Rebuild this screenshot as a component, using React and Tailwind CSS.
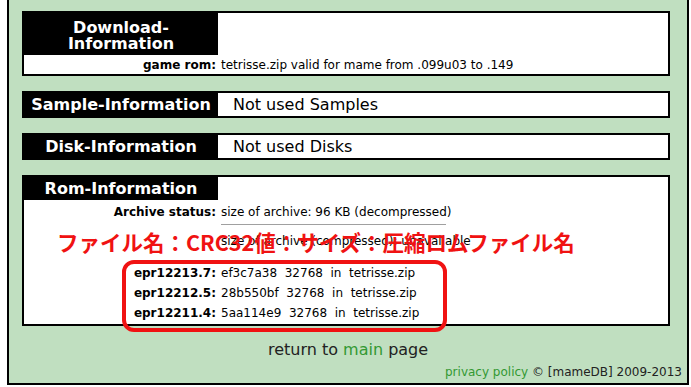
export default function App() {
  const label = "w-[192px] shrink-0 text-right font-bold";
  return (
    <div className="w-[691px] h-[387px] bg-white font-['DejaVu_Sans',sans-serif] text-black overflow-hidden">
      <div className="relative ml-[7px] w-[682px] h-[385px] bg-[#c0dfc0] border-2 border-t-0 border-black pt-[11px] flex flex-col">
        {/* Download */}
        <div className="ml-[13px] w-[648px] h-[65px] border-2 border-black bg-white flex flex-col">
          <div className="flex h-[42px]">
            <div className="w-[194px] bg-black text-white font-bold text-[16px] leading-[16px] flex flex-col items-center justify-center text-center pt-[3px]">
              <span>Download-</span>
              <span>Information</span>
            </div>
          </div>
          <div className="flex h-[19px] items-center text-[12px]">
            <div className={label}>game rom:</div>
            <div className="pl-[5px]">tetrisse.zip valid for mame from .099u03 to .149</div>
          </div>
        </div>

        {/* Sample */}
        <div className="ml-[13px] mt-[15px] w-[648px] h-[27px] border-2 border-black bg-white flex">
          <div className="w-[194px] bg-black text-white font-bold text-[16px] flex items-center justify-center">
            Sample-Information
          </div>
          <div className="pl-[15px] text-[16px] flex items-center">Not used Samples</div>
        </div>

        {/* Disk */}
        <div className="ml-[13px] mt-[15px] w-[648px] h-[27px] border-2 border-black bg-white flex">
          <div className="w-[194px] bg-black text-white font-bold text-[16px] flex items-center justify-center">
            Disk-Information
          </div>
          <div className="pl-[15px] text-[16px] flex items-center">Not used Disks</div>
        </div>

        {/* Rom */}
        <div className="ml-[13px] mt-[15px] w-[648px] h-[151px] border-2 border-black bg-white flex flex-col text-[12px]">
          <div className="flex h-[23px]">
            <div className="w-[194px] bg-black text-white font-bold text-[16px] flex items-center justify-center">
              Rom-Information
            </div>
          </div>
          <div className="flex h-[20px] mt-[2px] items-center">
            <div className={label}>Archive status:</div>
            <div className="pl-[5px]">size of archive: 96 KB (decompressed)</div>
          </div>
          <div className="flex mt-[2px]">
            <div className="w-[192px] shrink-0" />
            <div className="pl-[5px] flex-1">
              <div className="w-[225px] border-t border-[#a0a0a0]" />
            </div>
          </div>
          <div className="flex h-[20px] mt-[6px] items-center">
            <div className="w-[192px] shrink-0" />
            <div className="pl-[5px]">size of archive (compressed): unavailable</div>
          </div>
          <div className="flex flex-col mt-[12px]">
            {[
              ["epr12213.7:", "ef3c7a38\u00a0\u00a032768\u00a0\u00a0in\u00a0\u00a0tetrisse.zip"],
              ["epr12212.5:", "28b550bf\u00a0\u00a032768\u00a0\u00a0in\u00a0\u00a0tetrisse.zip"],
              ["epr12211.4:", "5aa114e9\u00a0\u00a032768\u00a0\u00a0in\u00a0\u00a0tetrisse.zip"],
            ].map(([k, v]) => (
              <div key={k} className="flex h-[20px] items-center">
                <div className={label}>{k}</div>
                <div className="pl-[5px]">{v}</div>
              </div>
            ))}
          </div>
        </div>

        {/* Footer */}
        <div className="mt-[14px] h-[20px] leading-[20px] text-center text-[16px] text-[#222]">
          return to <span className="text-[#339933]">main</span> page
        </div>
        <div className="mt-[4px] h-[16px] leading-[16px] text-right pr-[5px] text-[12px] text-[#222]">
          <span className="text-[#339933]">privacy policy</span> © [mameDB] 2009-2013
        </div>

        {/* annotations */}
        <div className="absolute left-[48px] top-[231px] text-[21.5px] leading-none font-bold text-[#f01212] font-['Noto_Sans_CJK_JP',sans-serif] whitespace-nowrap">
          ファイル名：CRC32値：サイズ：圧縮ロムファイル名
        </div>
        <div className="absolute left-[113px] top-[260px] w-[325px] h-[72px] border-4 border-[#f01212] rounded-[12px]" />
      </div>
    </div>
  );
}
